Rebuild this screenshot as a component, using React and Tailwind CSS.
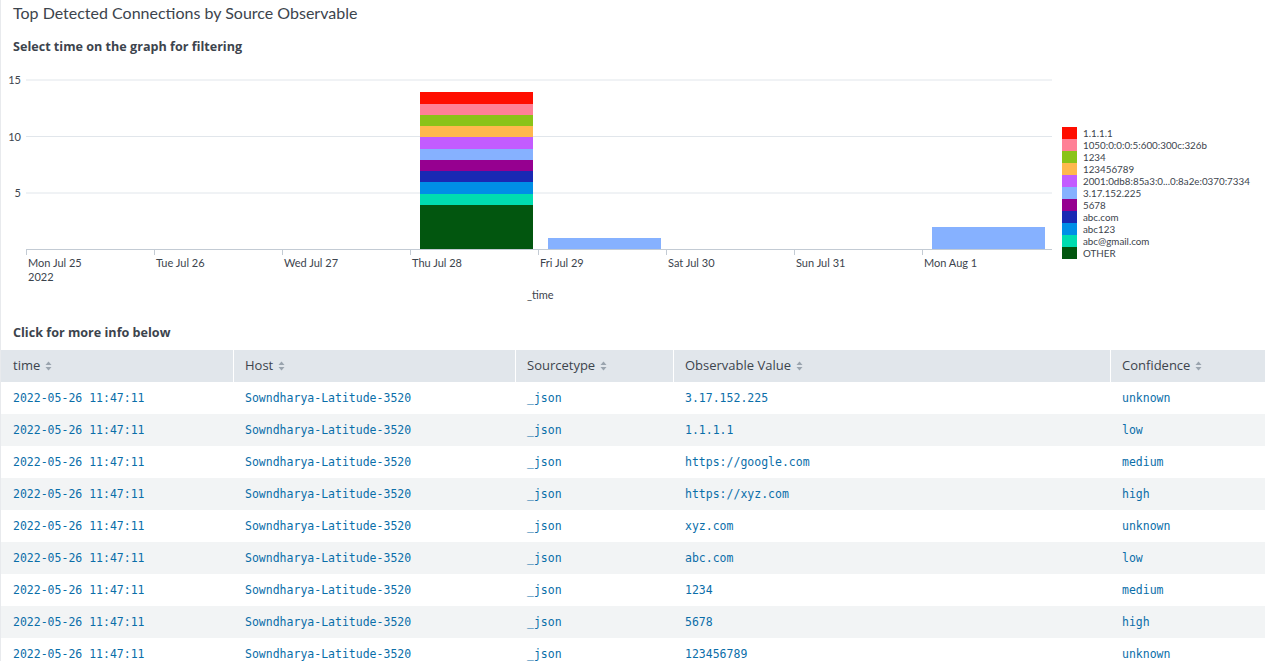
import React from "react";

const FONT = { fontFamily: "Lato, 'Open Sans', sans-serif" };
const OPEN = { fontFamily: "'Open Sans', Lato, sans-serif" };
const MONO = { fontFamily: "'DejaVu Sans Mono', 'Liberation Mono', monospace" };

const legend = [
  ["1.1.1.1", "#ff0d00"],
  ["1050:0:0:0:5:600:300c:326b", "#ff8096"],
  ["1234", "#8ac318"],
  ["123456789", "#ffb84d"],
  ["2001:0db8:85a3:0...0:8a2e:0370:7334", "#c35cff"],
  ["3.17.152.225", "#86b1ff"],
  ["5678", "#960090"],
  ["abc.com", "#1a29b3"],
  ["abc123", "#008fe6"],
  ["abc@gmail.com", "#00ddb0"],
  ["OTHER", "#02560f"],
];

const bounds = [32, 44, 55, 66, 77, 89, 100, 111, 122, 134, 145, 189];

const days = [
  "Mon Jul 25",
  "Tue Jul 26",
  "Wed Jul 27",
  "Thu Jul 28",
  "Fri Jul 29",
  "Sat Jul 30",
  "Sun Jul 31",
  "Mon Aug 1",
];

const rows = [
  ["3.17.152.225", "unknown"],
  ["1.1.1.1", "low"],
  ["https://google.com", "medium"],
  ["https://xyz.com", "high"],
  ["xyz.com", "unknown"],
  ["abc.com", "low"],
  ["1234", "medium"],
  ["5678", "high"],
  ["123456789", "unknown"],
];

function Sort() {
  return (
    <svg width="7" height="10" viewBox="0 0 7 10" className="ml-[5px] inline-block">
      <path d="M3.5 0.5 L6.5 4 L0.5 4 Z" fill="#9aa4ae" />
      <path d="M3.5 9.5 L6.5 6 L0.5 6 Z" fill="#9aa4ae" />
    </svg>
  );
}

function Chart() {
  return (
    <svg width="1055" height="250" viewBox="0 0 1055 250" style={FONT}>
      {[20, 76.5, 133].map((y) => (
        <line key={y} x1="25" x2="1051" y1={y} y2={y} stroke="#e1e6eb" strokeWidth="1" />
      ))}
      <text x="20" y="24" textAnchor="end" fontSize="11" fill="#3c444d">15</text>
      <text x="20" y="80.5" textAnchor="end" fontSize="11" fill="#3c444d">10</text>
      <text x="20" y="137" textAnchor="end" fontSize="11" fill="#3c444d">5</text>
      {legend.map(([, c], i) => (
        <rect key={i} x="419" width="113" y={bounds[i]} height={bounds[i + 1] - bounds[i]} fill={c} />
      ))}
      <rect x="547" width="113" y="178" height="11" fill="#86b1ff" />
      <rect x="931" width="113" y="167" height="22" fill="#86b1ff" />
      <line x1="25" x2="1051" y1="189.5" y2="189.5" stroke="#c3cbd4" strokeWidth="1" />
      {days.map((d, i) => (
        <g key={d}>
          <line x1={25.5 + 128 * i} x2={25.5 + 128 * i} y1="189" y2="195" stroke="#c3cbd4" strokeWidth="1" />
          <text x={27 + 128 * i} y="207" fontSize="11" fill="#3c444d">{d}</text>
        </g>
      ))}
      <text x="27" y="221" fontSize="11" fill="#3c444d">2022</text>
      <text x="526" y="239" fontSize="11" fill="#3c444d">_time</text>
    </svg>
  );
}

export default function App() {
  const cols = "grid grid-cols-[232px_282px_158px_437px_1fr]";
  return (
    <div className="w-[1265px] h-[661px] overflow-hidden bg-white border-l border-[#e8eaed] text-[#3c444d]" style={FONT}>
      <div className="pl-3 pt-[3px] text-[16px] leading-5">Top Detected Connections by Source Observable</div>
      <div className="pl-3 mt-[16px] text-[12.6px] leading-4 font-bold" style={OPEN}>Select time on the graph for filtering</div>
      <div className="mt-[5px] flex h-[250px]">
        <Chart />
        <div className="ml-[6px] pt-[67px] flex flex-col">
          {legend.map(([l, c]) => (
            <div key={l} className="flex items-center h-[12px]">
              <div className="w-[15px] h-[12px]" style={{ background: c }} />
              <span className="ml-[6px] text-[9.8px] leading-3 whitespace-nowrap">{l}</span>
            </div>
          ))}
        </div>
      </div>
      <div className="pl-3 mt-[15px] text-[12.6px] leading-4 font-bold" style={OPEN}>Click for more info below</div>
      <div className="mt-[9px]">
        <div className={`${cols} h-[32px] bg-[#e1e6eb] text-[13px]`} style={OPEN}>
          {["time", "Host", "Sourcetype", "Observable Value", "Confidence"].map((h, i) => (
            <div key={h} className={`flex items-center ${i === 0 ? "pl-3" : "pl-[11px] border-l border-white"}`}>
              {h}
              <Sort />
            </div>
          ))}
        </div>
        {rows.map(([v, c], r) => (
          <div key={r} className={`${cols} h-[32px] text-[11.5px] text-[#0a6ea9] ${r % 2 ? "bg-[#f2f4f5]" : "bg-white"}`} style={MONO}>
            {["2022-05-26 11:47:11", "Sowndharya-Latitude-3520", "_json", v, c].map((t, i) => (
              <div key={i} className={`flex items-center pt-[1px] ${i === 0 ? "pl-3" : "pl-[12px]"}`}>{t}</div>
            ))}
          </div>
        ))}
      </div>
    </div>
  );
}
